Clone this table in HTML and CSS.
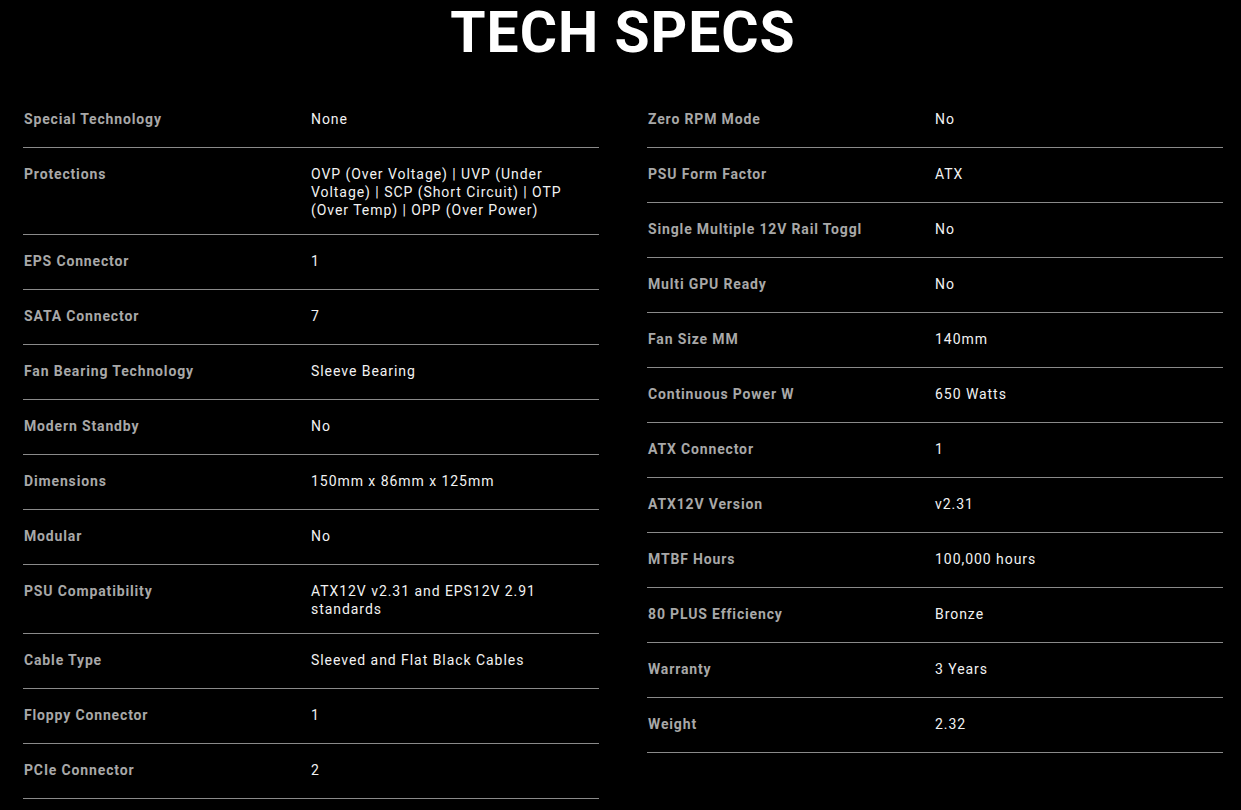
FILE: index.html
```html
<!DOCTYPE html>
<html lang="en">
<head>
<meta charset="utf-8">
<title>Tech Specs</title>
<link rel="stylesheet" href="styles.css">
</head>
<body>
<main class="specs">
  <h1 class="title">TECH SPECS</h1>
  <div class="cols">
    <div class="col">
      <div class="row"><div class="label">Special Technology</div><div class="value">None</div></div>
      <div class="row"><div class="label">Protections</div><div class="value">OVP (Over Voltage) | UVP (Under Voltage) | SCP (Short Circuit) | OTP (Over Temp) | OPP (Over Power)</div></div>
      <div class="row"><div class="label">EPS Connector</div><div class="value">1</div></div>
      <div class="row"><div class="label">SATA Connector</div><div class="value">7</div></div>
      <div class="row"><div class="label">Fan Bearing Technology</div><div class="value">Sleeve Bearing</div></div>
      <div class="row"><div class="label">Modern Standby</div><div class="value">No</div></div>
      <div class="row"><div class="label">Dimensions</div><div class="value">150mm x 86mm x 125mm</div></div>
      <div class="row"><div class="label">Modular</div><div class="value">No</div></div>
      <div class="row"><div class="label">PSU Compatibility</div><div class="value">ATX12V v2.31 and EPS12V 2.91 standards</div></div>
      <div class="row"><div class="label">Cable Type</div><div class="value">Sleeved and Flat Black Cables</div></div>
      <div class="row"><div class="label">Floppy Connector</div><div class="value">1</div></div>
      <div class="row"><div class="label">PCIe Connector</div><div class="value">2</div></div>
    </div>
    <div class="col">
      <div class="row"><div class="label">Zero RPM Mode</div><div class="value">No</div></div>
      <div class="row"><div class="label">PSU Form Factor</div><div class="value">ATX</div></div>
      <div class="row"><div class="label">Single Multiple 12V Rail Toggl</div><div class="value">No</div></div>
      <div class="row"><div class="label">Multi GPU Ready</div><div class="value">No</div></div>
      <div class="row"><div class="label">Fan Size MM</div><div class="value">140mm</div></div>
      <div class="row"><div class="label">Continuous Power W</div><div class="value">650 Watts</div></div>
      <div class="row"><div class="label">ATX Connector</div><div class="value">1</div></div>
      <div class="row"><div class="label">ATX12V Version</div><div class="value">v2.31</div></div>
      <div class="row"><div class="label">MTBF Hours</div><div class="value">100,000 hours</div></div>
      <div class="row"><div class="label">80 PLUS Efficiency</div><div class="value">Bronze</div></div>
      <div class="row"><div class="label">Warranty</div><div class="value">3 Years</div></div>
      <div class="row"><div class="label">Weight</div><div class="value">2.32</div></div>
    </div>
  </div>
</main>
</body>
</html>
```

FILE: styles.css
```css
html, body {
  margin: 0;
  padding: 0;
  background: #000;
}
body {
  font-family: Roboto, "Liberation Sans", sans-serif;
  color: #fff;
}
.specs {
  padding: 0 18px 0 23px;
}
.title {
  margin: 0;
  padding: 0 0 27px;
  text-align: center;
  font-size: 57px;
  line-height: 66px;
  font-weight: 700;
  letter-spacing: 1px;
  color: #fff;
}
.cols {
  display: grid;
  grid-template-columns: 576px 576px;
  column-gap: 48px;
  align-items: start;
}
.row {
  display: grid;
  grid-template-columns: 288px 288px;
  min-height: 22px;
  padding: 17px 0 15px;
  border-bottom: 1px solid #8a8a8a;
}
.label {
  font-size: 14px;
  line-height: 18px;
  font-weight: 700;
  letter-spacing: 0.85px;
  color: #a8a8a8;
  padding-left: 1px;
}
.value {
  font-size: 14px;
  line-height: 18px;
  letter-spacing: 0.95px;
  color: #f2f2f2;
  padding-right: 30px;
}
```
